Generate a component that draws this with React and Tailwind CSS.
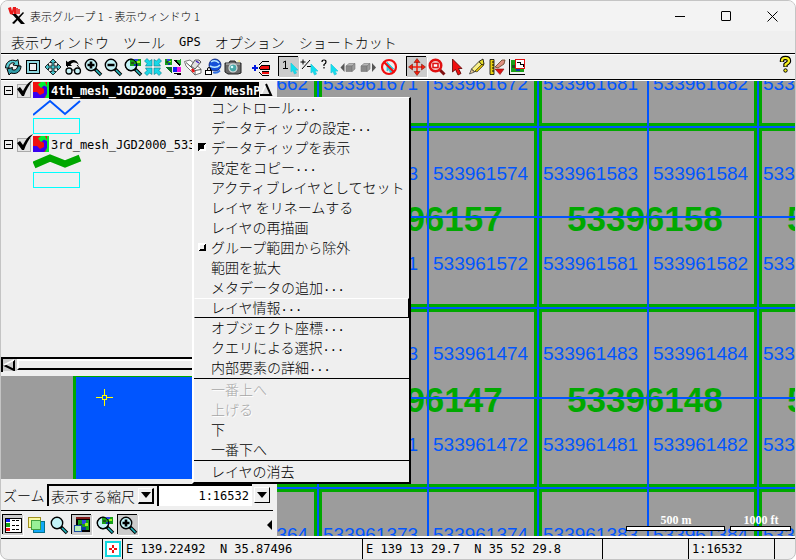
import React, { useState } from 'react';
import clsx from 'clsx';

const JP = "font-['Noto_Sans_CJK_JP',sans-serif] font-light";
const MONO = "font-['DejaVu_Sans_Mono',monospace]";

/* ---------- small drawings ---------- */

const Icon = ({ children, crisp }) => (
  <svg viewBox="0 0 20 20" width="20" height="20" className="block" shapeRendering={crisp ? 'crispEdges' : 'auto'}>
    {children}
  </svg>
);

const Lens = ({ children, fill = '#c4f4f8' }) => (
  <>
    <path d="M12 12l6 6" stroke="#000" strokeWidth="3.6" />
    <path d="M13 13l4.5 4.5" stroke="#20b8c0" strokeWidth="1.6" />
    <circle cx="8" cy="8" r="5.7" fill={fill} stroke="#000" strokeWidth="1.4" />
    {children}
  </>
);

const Cursor = ({ x = 0, y = 0, fill = '#10e0f0', stroke = '#30c8d8' }) => (
  <path transform={`translate(${x} ${y})`} d="M0 0v9l2-1.500 1.500 3.500 2-1-1.500-3h3z" fill={fill} stroke={stroke} strokeWidth=".8" />
);

const FourWay = ({ fill, stroke }) => (
  <path
    d="M10 2l3.500 3.500h-2.500v3.500h3.500V6.500L18 10l-3.500 3.500V11H11v3.500h2.500L10 18l-3.500-3.500H9V11H5.500v2.500L2 10l3.500-3.500V9H9V5.500H6.500z"
    fill={fill}
    stroke={stroke}
    strokeWidth=".8"
  />
);

const MapThumb = ({ x, y, w, h }) => (
  <g transform={`translate(${x} ${y})`} shapeRendering="crispEdges">
    <rect width={w} height={h} fill="#18a018" />
    <rect x={w * 0.35} y="0" width={w * 0.35} height={h * 0.35} fill="#3048e0" />
    <rect x={w * 0.6} y={h * 0.25} width={w * 0.3} height={h * 0.3} fill="#a0f020" />
    <rect x="1" y={h * 0.4} width={w * 0.3} height={h * 0.3} fill="#205020" />
    <rect x={w * 0.4} y={h * 0.7} width={w * 0.3} height={h * 0.25} fill="#1038a0" />
  </g>
);

const Cube = ({ x }) => (
  <g stroke="#777" strokeWidth=".6">
    <path d={`M${x} 9l3-2.500h6l-3 2.500z`} fill="#b8b8b8" />
    <path d={`M${x} 9h6v5.500h-6z`} fill="#888" />
    <path d={`M${x + 6} 9l3-2.500v5.500l-3 2.500z`} fill="#9c9c9c" />
  </g>
);

const icons = {
  redraw: (
    <Icon>
      <path d="M2.500 11C2.500 5 8 1.500 13 4l2-1.500 1 6.500-6-1 1.500-2C8 5 5.500 8 6 11z" fill="#58ccd4" stroke="#000" />
      <path d="M4 12l5.500-1.500-.5 2c3 1.500 5.500-.5 5.500-3.500h3.500c0 5-4 9-10 7l-2 2z" fill="#309ca8" stroke="#000" />
    </Icon>
  ),
  full: (
    <Icon crisp>
      <rect x="3.500" y="3.500" width="13" height="13" fill="#90d8e0" stroke="#000" />
      <rect x="6.500" y="6.500" width="7" height="7" fill="#efefef" stroke="#000" />
    </Icon>
  ),
  pan: <Icon><FourWay fill="#48c4cc" stroke="#000" /></Icon>,
  previous: (
    <Icon>
      <path d="M3 9V3.500l2 1.800C8 2 14 1.500 16 8.500c-2-3.500-6-4-8.500-1.200L9 9z" fill="#000" />
      <circle cx="6" cy="14" r="3" fill="#c8f4f8" stroke="#000" strokeWidth="1.300" />
      <circle cx="14.500" cy="14" r="3" fill="#c8f4f8" stroke="#000" strokeWidth="1.300" />
      <path d="M9 13h2.500M4 10l2-2M14 8l2.500 3" stroke="#000" />
    </Icon>
  ),
  zoomIn: <Icon><Lens><path d="M4.500 8h7M8 4.500v7" stroke="#000" strokeWidth="2.600" /></Lens></Icon>,
  zoomOut: <Icon><Lens><path d="M4.500 8h7" stroke="#000" strokeWidth="2.400" /></Lens></Icon>,
  zoomMap: (
    <Icon>
      <Lens />
      <MapThumb x={7} y={2} w={11} h={7} />
      <circle cx="8" cy="8" r="5.700" fill="none" stroke="#000" />
    </Icon>
  ),
  shrink: (
    <Icon>
      <g fill="#18d8e8" stroke="#087888" strokeWidth=".6">
        {[0, 90, 180, 270].map((a) => (
          <path key={a} transform={`rotate(${a} 10 10)`} d="M1.500 4l2.500-2.500 2.500 2.500L9 2.500V9H2.500L4 6.500z" />
        ))}
      </g>
    </Icon>
  ),
  tiles: (
    <Icon crisp>
      <MapThumb x={2} y={2} w={7} h={6} />
      <path d="M10 3h7v6z" fill="#000" />
      <path d="M2 10h7v7z" fill="#087020" />
      <rect x="10" y="10" width="4" height="5" fill="#1020f0" />
      <rect x="14" y="10" width="4" height="5" fill="#f010e0" />
      <path d="M10 16h8v2h-3z" fill="#000" />
      <path d="M13 4l5-2v7z" fill="#20a830" />
    </Icon>
  ),
  eraser: (
    <Icon>
      <path d="M1.500 4.500L7 3l11 9v4l-6 2L3 9z" fill="#fff" stroke="#777" />
      <path d="M3 5.500l9 8 6-1M12 13.500V18" fill="none" stroke="#555" />
      <path d="M8 9l4-6h4l2 2-6 7z" fill="#e0e0e0" stroke="#333" strokeWidth=".8" />
      <path d="M13 4l3 2" stroke="#4020c0" strokeWidth="1.500" />
      <path d="M9 12l2 3" stroke="#f01010" strokeWidth="2.500" />
    </Icon>
  ),
  globe: (
    <Icon>
      <circle cx="12" cy="8" r="6" fill="#1450d8" stroke="#082070" strokeWidth=".8" />
      <path d="M8 5c3-2 6-1 8 1M7 9c4 2 8 1 10-1" stroke="#b8e8ff" strokeWidth="1.500" fill="none" />
      <path d="M10 15.500q4 1 7-2" stroke="#3070e0" strokeWidth="1.800" fill="none" />
      <path d="M4.500 13v-1q0-1.500 1.500-1.500t1.500 1.500v1" fill="none" stroke="#000" />
      <rect x="2.500" y="13.500" width="6" height="4" fill="#fff" stroke="#000" />
    </Icon>
  ),
  camera: (
    <Icon>
      <path d="M2 6h4l1-2h5l1 2h5v10l-3 1H5l-3-2z" fill="#686868" stroke="#222" />
      <path d="M3 7h14" stroke="#c8c8c8" />
      <circle cx="10" cy="11" r="4" fill="#48a8a8" stroke="#ddd" strokeWidth="1.200" />
      <circle cx="9" cy="10" r="1.300" fill="#d8ffff" />
      <path d="M14 4l3-1v2z" fill="#f8f080" />
    </Icon>
  ),
  addLayer: (
    <Icon crisp>
      <path d="M4 8v6M1 11h6" stroke="#0018e0" strokeWidth="2" />
      <path d="M8 8l4-4h6M8 15l3 3h7" stroke="#000" fill="none" />
      <path d="M8 11l3-3h7v4h-7l-1 1z" fill="#f01010" stroke="#000" />
      <path d="M11 14.500h7" stroke="#000" />
      <path d="M11 15h7v2h-7z" fill="#f01010" />
    </Icon>
  ),
  one: (
    <Icon>
      <path d="M4 5.500L6.500 4v7M4 11.500h5" stroke="#000" fill="none" />
      <Cursor x={12} y={6} />
    </Icon>
  ),
  plusMinus: (
    <Icon>
      <path d="M1.500 5h5M4 2.500v5M3 12l8-9M8 9.500h4" stroke="#000" fill="none" />
      <Cursor x={12} y={7} />
    </Icon>
  ),
  query: (
    <Icon>
      <path d="M3 5q0-2 2-2t2 2q0 1.500-2 2.500v1.500M5 10v1.500" stroke="#000" fill="none" strokeWidth="1.200" />
      <Cursor x={12} y={7} />
    </Icon>
  ),
  prevObject: <Icon><path d="M5.500 6v9L1.500 10.500z" fill="#555" /><Cube x={7} /></Icon>,
  nextObject: <Icon><Cube x={2} /><path d="M13 6v9l4-4.500z" fill="#555" /></Icon>,
  none: (
    <Icon>
      <Cursor x={8} y={5} />
      <circle cx="10" cy="10" r="7" fill="none" stroke="#f01010" strokeWidth="2.200" />
      <path d="M5 5l10 10" stroke="#f01010" strokeWidth="2.200" />
    </Icon>
  ),
  move: (
    <Icon>
      <path d="M10 3v14M3 10h14" stroke="#f02010" strokeWidth="1.600" />
      <path d="M10 1.500l3 4H7zM10 18.500l3-4H7zM1.500 10l4-3v6zM18.500 10l-4-3v6z" fill="#f02010" stroke="#701000" strokeWidth=".5" />
    </Icon>
  ),
  zoomBox: (
    <Icon>
      <path d="M12 12l5.500 5.500" stroke="#801010" strokeWidth="3" />
      <circle cx="8.500" cy="8.500" r="5.800" fill="#f4c8c8" stroke="#e01010" strokeWidth="2.400" />
      <rect x="6" y="6.500" width="5" height="4" fill="#fff" stroke="#e01010" strokeWidth="1.500" />
    </Icon>
  ),
  pointer: <Icon><path d="M5.500 2v13l3-2.500L11 18l3-1.500-2.500-5H15z" fill="#f01010" stroke="#500" strokeWidth=".8" /></Icon>,
  pencil: (
    <Icon>
      <path d="M2.500 17l2-5 3 3z" fill="#e8c890" stroke="#444" strokeWidth=".8" />
      <path d="M4.500 12L12 4.500l3.500 3L8 15z" fill="#f8f088" stroke="#222" strokeWidth=".8" />
      <path d="M8 14l8-8 1 2-7 7z" fill="#d8b800" stroke="#222" strokeWidth=".6" />
      <path d="M12 4.500L16 2l1 5-2 1z" fill="#e8e030" stroke="#000" strokeWidth=".8" />
    </Icon>
  ),
  measure: (
    <Icon>
      <path d="M3 2.500h4v15H3z" fill="#e8d010" stroke="#000" strokeWidth=".8" />
      <path d="M5 5h2M5 8h2M5 11h2M5 14h2" stroke="#000" />
      <path d="M8 10l7-7h3l-1 4-6 4z" fill="#e09080" stroke="#604020" strokeWidth=".8" />
      <path d="M8 12h9l-4 5.500z" fill="#e01010" stroke="#801010" strokeWidth=".6" />
    </Icon>
  ),
  mapScale: (
    <Icon crisp>
      <path d="M2.500 2v15.500H18" fill="none" stroke="#000" />
      <MapThumb x={4} y={3} w={13} h={12} />
      <rect x="8.500" y="2.500" width="9" height="9" fill="#fff" stroke="#e01010" />
      <path d="M10 5h3v2h3v3" stroke="#000" fill="none" />
    </Icon>
  ),
  help: (
    <Icon>
      <g fill="none" strokeLinejoin="round">
        <path d="M7 8V6.500Q7 4 10.500 4T14 7q0 1.500-3.500 3.500v2.500" stroke="#000" strokeWidth="4.400" />
        <path d="M7 7.500V6.500Q7 4 10.500 4T14 7q0 1.500-3.500 3.500v2" stroke="#f8f020" strokeWidth="2.200" />
      </g>
      <circle cx="10.500" cy="16.500" r="1.700" fill="#f8f020" stroke="#000" />
    </Icon>
  ),
  legend: (
    <Icon crisp>
      <rect x="2" y="3" width="16" height="14" fill="#fff" stroke="#000" />
      <rect x="3" y="4" width="4" height="3" fill="#1020f0" />
      <rect x="3" y="8" width="4" height="4" fill="#10a010" />
      <rect x="3" y="13" width="4" height="3" fill="#f01010" />
      <path d="M9 5.500h8M9 10h8M9 14.500h8" stroke="#000" strokeWidth="1" strokeDasharray="3 1" />
    </Icon>
  ),
  layers: (
    <Icon crisp>
      <rect x="7.500" y="6.500" width="11" height="11" fill="#10a8f8" stroke="#087088" />
      <rect x="2.500" y="2.500" width="12" height="10" fill="#f8f8a0" stroke="#a09020" />
      <rect x="5.500" y="5.500" width="9" height="9" fill="#98f098" stroke="#40a040" />
    </Icon>
  ),
  lens: <Icon><Lens /></Icon>,
  locator: (
    <Icon crisp>
      <rect x="4" y="2" width="14" height="15" fill="#000" />
      <rect x="4" y="2" width="14" height="2" fill="#801818" />
      <MapThumb x={6} y={5} w={11} h={10} />
      <rect x="2" y="10" width="7" height="6" fill="#b8f0b8" stroke="#1848a0" />
    </Icon>
  ),
};

const LayerBadge = () => (
  <svg width="16" height="16" viewBox="0 0 16 16" className="block shrink-0">
    <rect width="16" height="16" fill="#f01010" />
    <path d="M0 10h4l3 3 4-2V7L8 5l3-2 3 1v8l-3 4H0z" fill="#3800f0" />
    <path d="M5 2.500L8 0h8v16h-4l2-4V5l-3-1.500L8 6z" fill="#00f030" />
    <path d="M12 0h2v4z" fill="#f01010" />
  </svg>
);

/* ---------- toolbars ---------- */

const ToolButton = ({ name, label, pressed }) => (
  <button
    type="button"
    aria-label={label}
    aria-pressed={pressed}
    className={clsx('h-5 w-5 shrink-0', pressed && 'bg-[#cccccc] shadow-[-1px_-1px_0_#000,1px_1px_0_#fff]')}
  >
    {icons[name]}
  </button>
);

const toolGroups = [
  [
    ['redraw', '再描画'],
    ['full', '全体表示'],
    ['pan', '移動'],
    ['previous', '前の表示'],
    ['zoomIn', '拡大'],
    ['zoomOut', '縮小'],
    ['zoomMap', 'レイヤに合わせる'],
    ['shrink', '中央へ'],
    ['tiles', 'タイル'],
    ['eraser', '消去'],
    ['globe', '地球'],
    ['camera', 'スナップショット'],
  ],
  [['addLayer', 'レイヤの追加']],
  [
    ['one', '単一選択', true],
    ['plusMinus', '追加選択'],
    ['query', '問い合わせ'],
    ['prevObject', '前の要素'],
    ['nextObject', '次の要素'],
    ['none', '選択解除'],
  ],
  [
    ['move', 'パン', true],
    ['zoomBox', 'ズームボックス'],
    ['pointer', '選択'],
    ['pencil', '編集'],
    ['measure', '計測'],
    ['mapScale', '地図'],
  ],
];

/* ---------- layer list ---------- */

const Layer = ({ id, name, selected, children }) => {
  const [visible, setVisible] = useState(true);
  return (
    <li className="h-[54px]">
      <div className="flex h-[18px] items-center">
        <button type="button" aria-label="折りたたむ" className="ml-[3px] flex h-[9px] w-[9px] items-center justify-center border border-black">
          <span className="h-px w-[5px] bg-black" />
        </button>
        <span className="relative ml-1 h-4 w-4">
          <input
            id={id}
            type="checkbox"
            checked={visible}
            onChange={() => setVisible(!visible)}
            className="mt-0.5 block h-3.5 w-3.5 appearance-none border border-[#aaaaaa] bg-[#e4e4e4]"
          />
          {visible && (
            <svg width="17" height="17" viewBox="0 0 17 17" className="pointer-events-none absolute -top-0.5 left-0">
              <path d="M0 9l3-2 3 4C8 7 11 2 16 0 12 5 9 10 7 16H5z" fill="#000" />
            </svg>
          )}
        </span>
        <LayerBadge />
        <label
          htmlFor={id}
          className={clsx(
            'h-[17px] min-w-0 flex-1 overflow-hidden pl-0.5 text-xs leading-[18px] whitespace-pre',
            MONO,
            selected && 'mr-[18px] bg-black font-bold text-white'
          )}
        >
          {name}
        </label>
      </div>
      <div className="ml-8">
        {children}
        <div className="mt-px h-4 w-[47px] border border-[#00ffff]" />
      </div>
    </li>
  );
};

const Sidebar = () => (
  <aside className="flex w-[276px] shrink-0 flex-col bg-[#efefef]">
    <div className="relative min-h-0 flex-1">
      <ul>
        <Layer id="layer-4th" name="4th_mesh_JGD2000_5339 / MeshPo" selected>
          <svg width="50" height="18" className="block">
            <path d="M0 16L17 2l15 13L47 2" fill="none" stroke="#0055ff" strokeWidth="2" />
          </svg>
        </Layer>
        <Layer id="layer-3rd" name="3rd_mesh_JGD2000_533">
          <svg width="50" height="18" className="block">
            <path d="M1 12L17 5l15 6L47 5" fill="none" stroke="#00a800" strokeWidth="7" />
          </svg>
        </Layer>
      </ul>
      <button type="button" aria-label="上へスクロール" className="absolute top-0.5 right-1 bg-[#efefef]">
        <svg width="14" height="14" viewBox="0 0 14 14" className="block">
          <path d="M7 1l5 11H2z" fill="#ddd" />
          <path d="M7 1L2 12" stroke="#fff" strokeWidth="1.500" />
          <path d="M7 1l5 11H1" stroke="#000" strokeWidth="2" fill="none" />
        </svg>
      </button>
    </div>
    <div className="mb-1 flex h-[15px] shrink-0 border-t-2 border-l-2 border-black">
      <button type="button" aria-label="左へスクロール" className="h-3 w-3.5 bg-[#cccccc]">
        <svg width="13" height="12" viewBox="0 0 13 12" className="block">
          <path d="M11 1v10L1 6" fill="none" stroke="#000" strokeWidth="2" />
          <path d="M11 1L1 6" stroke="#fff" strokeWidth="1.500" />
        </svg>
      </button>
      <div className="h-[11px] flex-1 border-t-2 border-b-2 border-l-2 border-t-white border-b-black border-l-white" />
    </div>
    <div className="flex h-[103px] shrink-0 bg-[#9c9c9c]">
      <div className="w-[72px]" />
      <svg className="h-full flex-1 border-t border-l-[3px] border-[#00a800] bg-[#0055ff]" shapeRendering="crispEdges">
        <path d="M20 20.500h6M31 20.500h6M28.500 12v6M28.500 23v6" stroke="#ffff00" />
        <rect x="26.500" y="18.500" width="4" height="4" fill="none" stroke="#ffff00" />
      </svg>
    </div>
    <div className={clsx('flex h-[31px] shrink-0 items-center pl-0.5 text-[14px]', JP)}>
      <label htmlFor="zoom-mode" className="w-11 leading-5">ズーム</label>
      <div className="relative h-[22px] w-[110px] border-t-2 border-l-2 border-black">
        <select id="zoom-mode" className="block h-5 w-full appearance-none bg-transparent pl-0.5 text-[14px] leading-5">
          <option>表示する縮尺</option>
        </select>
        <span className="pointer-events-none absolute top-0.5 right-[3px] flex h-4 w-4 items-center justify-center border-t border-r-2 border-b-2 border-l border-t-white border-r-black border-b-black border-l-white">
          <svg width="10" height="6"><path d="M0 0h10L5 6z" /></svg>
        </span>
      </div>
      <input
        aria-label="縮尺"
        defaultValue="1:16532"
        className={clsx('h-[22px] w-[95px] border-t-2 border-l-2 border-black bg-white pr-[3px] text-right text-xs', MONO)}
      />
      <button type="button" aria-label="縮尺の一覧" className="ml-0.5 flex h-4 w-4 items-center justify-center border-t border-r border-b border-l border-t-white border-r-black border-b-black border-l-white">
        <svg width="10" height="6"><path d="M0 0h10L5 6z" /></svg>
      </button>
    </div>
    <div className="mr-1 flex h-7 shrink-0 items-center gap-[3px] border-t border-black pl-0.5">
      <ToolButton name="legend" label="凡例" pressed />
      <ToolButton name="layers" label="レイヤ" />
      <ToolButton name="lens" label="拡大鏡" />
      <ToolButton name="locator" label="ロケータ" pressed />
      <ToolButton name="zoomMap" label="範囲" />
      <ToolButton name="zoomIn" label="拡大表示" pressed />
      <button type="button" aria-label="サイドバーを隠す" className="ml-auto">
        <svg width="6" height="10" className="block"><path d="M5 0v10L0 5z" /></svg>
      </button>
    </div>
  </aside>
);

/* ---------- map ---------- */

const smallLabels = [
  [9, ['533961662', '533961671', '533961672', '533961681', '533961682', '533961691']],
  [99, ['533961564', '533961573', '533961574', '533961583', '533961584', '533961593']],
  [189, ['533961562', '533961571', '533961572', '533961581', '533961582', '533961591']],
  [279, ['533961464', '533961473', '533961474', '533961483', '533961484', '533961493']],
  [370, ['533961462', '533961471', '533961472', '533961481', '533961482', '533961491']],
  [460, ['533961364', '533961373', '533961374', '533961383', '533961384', '533961393']],
];

const bigLabels = [
  [150, ['53396157', '53396158', '53396159']],
  [331, ['53396147', '53396148', '53396149']],
];

const MapView = () => (
  <svg className="block h-full w-full bg-[#9c9c9c]">
    <g stroke="#00a800" strokeWidth="8" shapeRendering="crispEdges">
      {[41, 261, 481].map((x) => <line key={x} x1={x} x2={x} y1="0" y2="100%" />)}
      {[46, 227, 407].map((y) => <line key={y} y1={y} y2={y} x1="0" x2="100%" />)}
    </g>
    <g fill="#00a800" className="font-['Liberation_Sans',sans-serif] text-[35px] font-bold">
      {bigLabels.map(([y, names]) => names.map((n, i) => <text key={n} x={70 + i * 220} y={y}>{n}</text>))}
    </g>
    <g stroke="#0055ff" strokeWidth="2" shapeRendering="crispEdges">
      {[41, 151, 261, 371, 481].map((x) => <line key={x} x1={x} x2={x} y1="0" y2="100%" />)}
      {[46, 136, 227, 317, 407].map((y) => <line key={y} y1={y} y2={y} x1="0" x2="100%" />)}
    </g>
    <g fill="#0055ff" className="font-['Liberation_Sans',sans-serif] text-[19px]">
      {smallLabels.map(([y, names]) => names.map((n, i) => <text key={n} x={-64 + i * 110} y={y}>{n}</text>))}
    </g>
    <g fill="#fff" stroke="#000" shapeRendering="crispEdges">
      <rect x="349.500" y="445.500" width="98" height="4" />
      <rect x="453.500" y="445.500" width="60" height="4" />
    </g>
    <g fill="#fff" textAnchor="middle" className="font-['Liberation_Serif',serif] text-[12px] font-bold">
      <text x="399" y="443">500 m</text>
      <text x="484" y="443">1000 ft</text>
    </g>
  </svg>
);

/* ---------- context menu ---------- */

const menuSections = [
  [
    { label: 'コントロール', more: true },
    { label: 'データティップの設定', more: true },
    { label: 'データティップを表示', mark: 'on' },
    { label: '設定をコピー', more: true },
    { label: 'アクティブレイヤとしてセット' },
    { label: 'レイヤ をリネームする' },
    { label: 'レイヤの再描画' },
    { label: 'グループ範囲から除外', mark: 'off' },
    { label: '範囲を拡大' },
    { label: 'メタデータの追加', more: true },
    { label: 'レイヤ情報', more: true, active: true },
    { label: 'オブジェクト座標', more: true },
    { label: 'クエリによる選択', more: true },
    { label: '内部要素の詳細', more: true },
  ],
  [
    { label: '一番上へ', disabled: true },
    { label: '上げる', disabled: true },
    { label: '下' },
    { label: '一番下へ' },
  ],
  [{ label: 'レイヤの消去' }],
];

const Mark = ({ state }) => (
  <svg width="8" height="8" viewBox="0 0 8 8" shapeRendering="crispEdges">
    {state === 'on' ? (
      <>
        <path d="M8 0v8H0z" fill="#fff" />
        <path d="M0 0h8L6 2v4H2L0 8z" fill="#000" />
      </>
    ) : (
      <>
        <path d="M0 0h8v8H0z" fill="#fff" />
        <path d="M2 2h4v4H2z" fill="#efefef" />
        <path d="M8 0v8H0l2-2h4V2z" fill="#000" />
      </>
    )}
  </svg>
);

const ContextMenu = () => (
  <div
    role="menu"
    className={clsx(
      'absolute top-24 left-[191px] w-[219px] border-t border-r-2 border-b-2 border-l-2 border-t-white border-r-black border-b-black border-l-white bg-[#efefef] text-[14px]',
      JP
    )}
  >
    {menuSections.map((items, s) => (
      <div key={s} className={clsx(s > 0 && 'border-t border-black pt-px')}>
        {items.map((item) => (
          <button
            key={item.label}
            type="button"
            role="menuitem"
            disabled={item.disabled}
            className={clsx(
              'flex h-5 w-full items-center border pb-0.5 text-left leading-4 whitespace-pre',
              item.active ? 'border-t-white border-r-black border-b-black border-l-transparent' : 'border-transparent',
              item.disabled && 'text-[#a6a6a6] [text-shadow:1px_1px_0_#fff]'
            )}
          >
            <span className="w-4 shrink-0 pl-[3px]">{item.mark && <Mark state={item.mark} />}</span>
            {item.label}
            {item.more && <span className={clsx('text-xs', MONO)}>...</span>}
          </button>
        ))}
      </div>
    ))}
  </div>
);

/* ---------- window ---------- */

const App = () => (
  <div className="relative flex h-screen flex-col overflow-hidden rounded-lg border border-[#c4c4c4] bg-[#efefef] text-black">
    <header className="flex h-[30px] shrink-0 items-center bg-[#f3f3f3]">
      <svg width="18" height="18" viewBox="0 0 18 18" className="mr-1 ml-[7px]">
        <path d="M0 1l3-1 1 4 1-4h3v8H6V4L5 8 2 7z" fill="#e81818" />
        <path d="M9 1v6M11 7V2" stroke="#e81818" strokeWidth="1.500" />
        <path d="M4 7h4l9 10h-4zM16 6L6 17l-2-1L15 5z" fill="#000" />
      </svg>
      <h1 className={clsx('flex-1 text-[11px] whitespace-pre', JP)}>表示グループ 1  - 表示ウィンドウ 1</h1>
      <button type="button" aria-label="最小化" className="flex h-full w-[46px] items-center justify-center">
        <span className="h-px w-2.5 bg-black" />
      </button>
      <button type="button" aria-label="最大化" className="flex h-full w-[46px] items-center justify-center">
        <span className="h-2.5 w-2.5 rounded-[1px] border border-black" />
      </button>
      <button type="button" aria-label="閉じる" className="flex h-full w-[46px] items-center justify-center">
        <svg width="11" height="11"><path d="M.5.5l10 10M10.500.5l-10 10" stroke="#000" /></svg>
      </button>
    </header>

    <nav className={clsx('flex h-[23px] shrink-0 items-center gap-3.5 border-b border-black pl-2.5 text-[14px]', JP)}>
      <button type="button">表示ウィンドウ</button>
      <button type="button">ツール</button>
      <button type="button" className={clsx('text-xs', MONO)}>GPS</button>
      <button type="button">オプション</button>
      <button type="button">ショートカット</button>
    </nav>

    <div className="flex h-[26px] shrink-0 items-center gap-2 border-t border-b border-t-white border-b-black pl-0.5">
      {toolGroups.map((group, i) => (
        <div key={i} className="flex">
          {group.map(([name, label, pressed]) => (
            <ToolButton key={name} name={name} label={label} pressed={pressed} />
          ))}
        </div>
      ))}
      <div className="ml-auto">
        <ToolButton name="help" label="ヘルプ" />
      </div>
    </div>

    <main className="flex min-h-0 flex-1 border-t border-white">
      <Sidebar />
      <div className="min-w-0 flex-1 overflow-hidden border-b-2 border-white">
        <MapView />
      </div>
    </main>

    <footer className={clsx('flex h-[21px] shrink-0 border-t border-black text-xs leading-5 whitespace-pre', MONO)}>
      <div className="w-[102px] border-r border-black" />
      <div className="flex w-5 items-center justify-center border-r border-black">
        <button type="button" aria-label="位置" className="block">
          <svg width="16" height="16" viewBox="0 0 16 16" className="block" shapeRendering="crispEdges">
            <rect x="1" y="1" width="14" height="14" fill="#fff" stroke="#10d8e0" strokeWidth="2" />
            <path d="M8 4v3M8 9v3M4 8h3M9 8h3" stroke="#f01010" strokeWidth="2" />
          </svg>
        </button>
      </div>
      <div className="w-60 border-r border-black pl-[3px]">E 139.22492  N 35.87496</div>
      <div className="w-60 border-r border-black pl-[3px]">E 139 13 29.7  N 35 52 29.8</div>
      <div className="min-w-0 flex-1 border-r border-black" />
      <div className="w-[86px] border-r border-black pl-[3px]">1:16532</div>
      <div className="w-5" />
    </footer>

    <ContextMenu />
  </div>
);

export default App;
